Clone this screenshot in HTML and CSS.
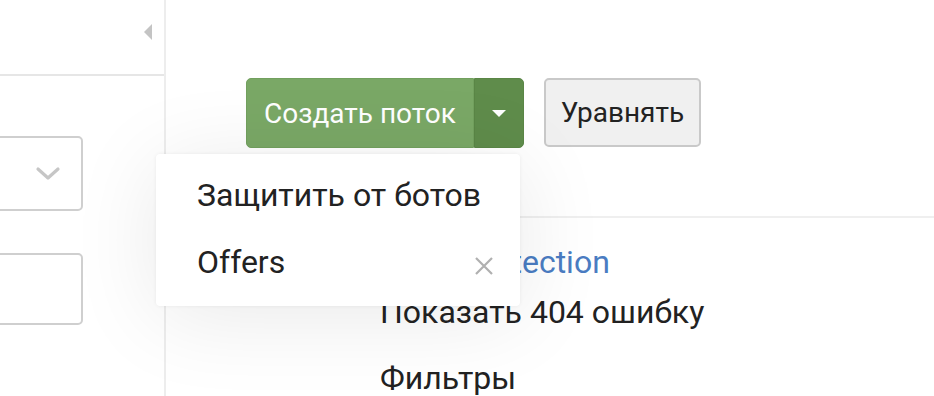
FILE: index.html
```html
<!DOCTYPE html>
<html lang="ru">
<head>
    <meta charset="UTF-8">
    <meta name="viewport" content="width=device-width, initial-scale=1.0">
    <title>Потоки</title>
    <link rel="stylesheet" href="styles.css">
</head>
<body>
    <!-- Sidebar -->
    <aside class="sidebar">
        <div class="sidebar-head">
            <span class="collapse"></span>
        </div>
        <div class="sidebar-body">
            <div class="field select">
                <svg class="chevron" width="26" height="16" viewBox="0 0 26 16">
                    <path d="M3 3 L13 12 L23 3" fill="none" stroke="#c6c6c6" stroke-width="3.2" stroke-linecap="round" stroke-linejoin="round"/>
                </svg>
            </div>
            <div class="field"></div>
        </div>
    </aside>

    <!-- Main -->
    <main class="main">
        <div class="toolbar">
            <div class="btn-group">
                <button class="btn btn-green">Создать поток</button>
                <button class="btn btn-green btn-caret"><span class="caret"></span></button>

                <!-- Dropdown menu -->
                <div class="dropdown">
                    <div class="dropdown-item">Защитить от ботов</div>
                    <div class="dropdown-item">
                        Offers
                        <svg class="close" width="20" height="20" viewBox="0 0 20 20">
                            <path d="M2 2 L18 18 M18 2 L2 18" stroke="#b0b0b0" stroke-width="2.2"/>
                        </svg>
                    </div>
                </div>
            </div>
            <button class="btn btn-light">Уравнять</button>
        </div>

        <div class="streams">
            <a class="stream-link" href="#">DDos protection</a>
            <div class="stream">Показать 404 ошибку</div>
            <div class="stream">Фильтры</div>
        </div>
    </main>
</body>
</html>
```

FILE: styles.css
```css
/* General */
body {
    margin: 0;
    font-family: Roboto, "Liberation Sans", sans-serif;
    background: #ffffff;
    color: #222;
    display: flex;
    height: 100vh;
    overflow: hidden;
}

/* Sidebar */
.sidebar {
    width: 164px;
    flex-shrink: 0;
    border-right: 2px solid #ededed;
}

.sidebar-head {
    height: 76px;
    border-bottom: 2px solid #e6e6e6;
    display: flex;
    justify-content: flex-end;
    padding-top: 24px;
    padding-right: 12px;
    box-sizing: border-box;
}

.collapse {
    width: 0;
    height: 0;
    border-top: 8px solid transparent;
    border-bottom: 8px solid transparent;
    border-right: 8px solid #c4c4c4;
}

.sidebar-body {
    padding-top: 60px;
    display: flex;
    flex-direction: column;
    gap: 42px;
}

.field {
    width: 120px;
    height: 72px;
    margin-left: -37px;
    border: 2px solid #cfcfcf;
    border-radius: 5px;
    box-sizing: border-box;
}

.field.select {
    height: 75px;
    display: flex;
    align-items: center;
    justify-content: flex-end;
    padding-right: 20px;
}

/* Main */
.main {
    flex: 1;
}

.toolbar {
    display: flex;
    gap: 20px;
    padding: 78px 0 0 80px;
}

.btn-group {
    position: relative;
    display: flex;
}

.btn {
    font-family: inherit;
    font-size: 28px;
    border-radius: 5px;
    cursor: pointer;
}

.btn-green {
    height: 70px;
    padding: 0 17px 0 17px;
    background: #7aa866;
    color: #fff;
    border: 1px solid #72a05e;
    border-radius: 5px 0 0 5px;
}

.btn-caret {
    width: 50px;
    padding: 0;
    background: #5f8c4b;
    border-color: #5a8646;
    border-radius: 0 5px 5px 0;
    display: flex;
    align-items: center;
    justify-content: center;
}

.caret {
    width: 0;
    height: 0;
    border-left: 7px solid transparent;
    border-right: 7px solid transparent;
    border-top: 7px solid #fff;
}

.btn-light {
    height: 69px;
    padding: 0 15px;
    background: #f0f0f0;
    color: #222;
    border: 2px solid #c9c9c9;
}

/* Dropdown */
.dropdown {
    position: absolute;
    top: 76px;
    left: -90px;
    width: 364px;
    height: 152px;
    background: #fff;
    border-radius: 4px;
    box-shadow: 0 0 4px rgba(0, 0, 0, 0.06), 0 10px 90px rgba(0, 0, 0, 0.09);
    padding-top: 7px;
    box-sizing: border-box;
    z-index: 10;
}

.dropdown-item {
    position: relative;
    height: 67px;
    padding-left: 41px;
    display: flex;
    align-items: center;
    font-size: 32px;
    color: #222;
}

.close {
    position: absolute;
    right: 26px;
    top: 28px;
}

/* Streams */
.streams {
    margin-top: 68px;
    border-top: 2px solid #efefef;
    padding: 24px 0 0 214px;
    display: flex;
    flex-direction: column;
}

.stream-link {
    font-size: 32px;
    color: #4a7cc2;
    text-decoration: none;
    line-height: 40px;
}

.stream {
    font-size: 32px;
    line-height: 40px;
    margin-top: 10px;
}

.stream + .stream {
    margin-top: 26px;
}
```
